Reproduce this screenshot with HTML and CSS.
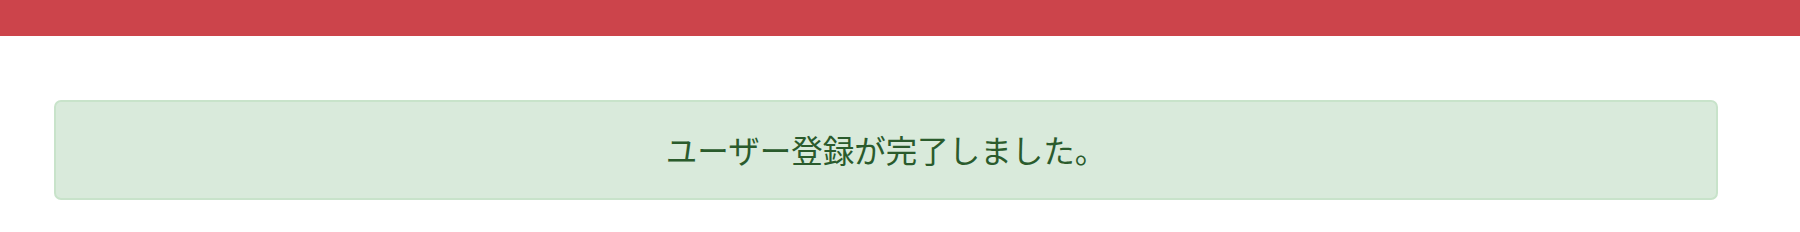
FILE: index.html
```html
<!DOCTYPE html>
<html lang="ja">
<head>
<meta charset="utf-8">
<title>ユーザー登録完了</title>
<link rel="stylesheet" href="styles.css">
</head>
<body>
<header class="topbar"></header>
<main class="content">
  <div class="alert-success">ユーザー登録が完了しました。</div>
</main>
</body>
</html>
```
FILE: styles.css
```css
html, body {
  margin: 0;
  padding: 0;
  background: #ffffff;
}
body {
  font-family: "Noto Sans CJK JP", "Noto Sans", sans-serif;
}
.topbar {
  height: 36px;
  background: #cc444b;
}
.content {
  padding: 64px 82px 0 54px;
}
.alert-success {
  box-sizing: border-box;
  height: 100px;
  display: flex;
  align-items: center;
  justify-content: center;
  background: #d9eadb;
  border: 2px solid #c8e3ca;
  border-radius: 7px;
  color: #2a5b2c;
  font-size: 31.5px;
  line-height: 1;
  padding-bottom: 1px;
}
```
